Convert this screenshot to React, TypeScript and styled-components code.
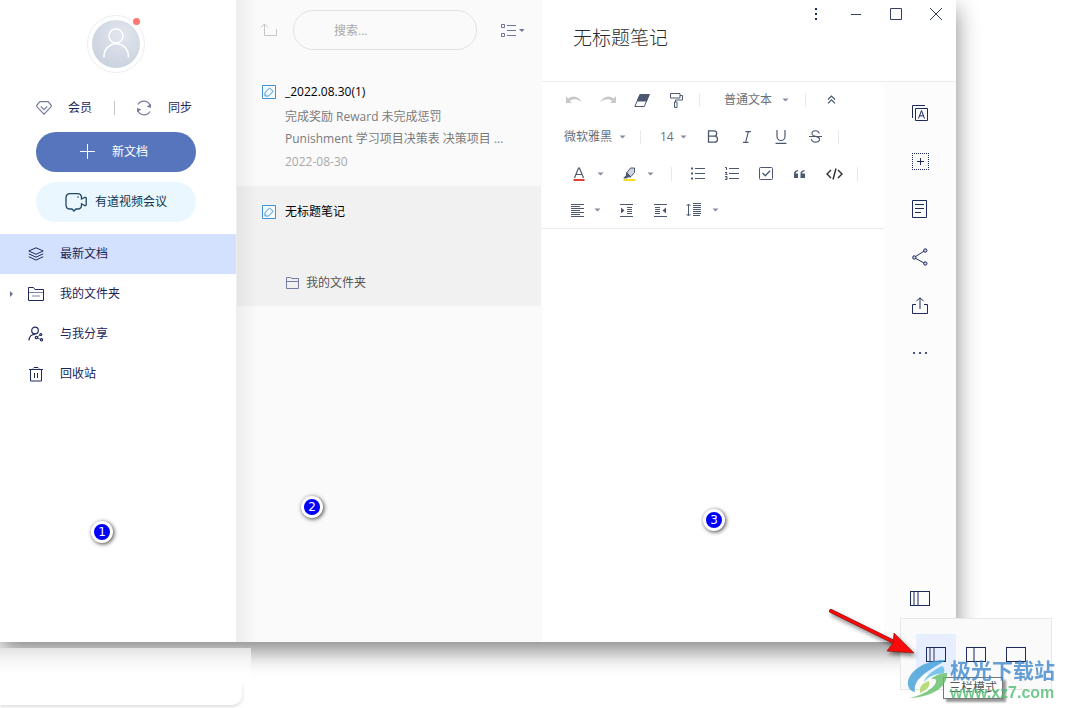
import React from 'react';
import styled, { createGlobalStyle } from 'styled-components';

const GlobalStyle = createGlobalStyle`
  *, *::before, *::after { box-sizing: border-box; }
  body {
    margin: 0;
    background: #fff;
    font-family: "Open Sans", "Noto Sans CJK SC", sans-serif;
    font-size: 12px;
    line-height: 20px;
    color: #1f2a5c;
  }
  button, input, select { font: inherit; color: inherit; margin: 0; padding: 0; }
  button { border: 0; background: none; cursor: pointer; }
  ul { list-style: none; margin: 0; padding: 0; }
  svg { display: block; flex: none; }
`;

const Desktop = styled.div`
  position: relative;
  display: flex;
  flex-direction: column;
  min-height: 100vh;
  overflow: hidden;
`;

const AppWindow = styled.div`
  flex: 1;
  display: flex;
  margin-right: 111px;
  background: #fff;
  box-shadow: 0 9px 22px rgba(0, 0, 0, 0.48);
`;

/* ---------- left column ---------- */

const Sidebar = styled.aside`
  flex: none;
  width: 236px;
  display: flex;
  flex-direction: column;
  background: #fff;
`;

const Account = styled.div`
  display: flex;
  flex-direction: column;
  align-items: center;
  padding: 15px 36px 12px;
`;

const Avatar = styled.button`
  position: relative;
  width: 58px;
  height: 58px;
  margin-right: 4px;
  border: 1px solid #ecedf6;
  border-radius: 50%;
  display: flex;
  align-items: center;
  justify-content: center;
`;

const AvatarFace = styled.span`
  width: 48px;
  height: 48px;
  border-radius: 50%;
  background: radial-gradient(circle at 60% 30%, #e2e6ee, #c3cddb);
`;

const AvatarDot = styled.span`
  position: absolute;
  top: 2px;
  right: 4px;
  width: 7px;
  height: 7px;
  border-radius: 50%;
  background: #ff7770;
`;

const AccountLinks = styled.div`
  align-self: stretch;
  display: flex;
  align-items: center;
  justify-content: space-between;
  margin: 25px 8px 14px 0;
`;

const AccountLink = styled.button`
  display: flex;
  align-items: center;
  gap: 16px;
`;

const Divider = styled.span<{ $space?: number; $dark?: boolean }>`
  flex: none;
  width: 1px;
  height: 14px;
  margin: 0 ${(p) => p.$space ?? 0}px;
  background: ${(p) => (p.$dark ? '#c4c4c8' : '#e9e9e9')};
`;

const PillButton = styled.button<{ $primary?: boolean }>`
  width: 160px;
  height: 40px;
  margin: 0 4px 10px 0;
  padding-right: ${(p) => (p.$primary ? 4 : 0)}px;
  border-radius: 20px;
  display: flex;
  align-items: center;
  justify-content: center;
  gap: ${(p) => (p.$primary ? 16 : 8)}px;
  color: ${(p) => (p.$primary ? '#fff' : '#0c3350')};
  background: ${(p) => (p.$primary ? '#5675bc' : '#ebf7fe')};
  &:last-child { margin-bottom: 0; }
`;

const NavItem = styled.a<{ $active?: boolean }>`
  height: 40px;
  padding-left: 8px;
  display: flex;
  align-items: center;
  color: #1a2456;
  text-decoration: none;
  background: ${(p) => (p.$active ? '#d3e1fe' : 'transparent')};
`;

const NavArrow = styled.span`
  width: 20px;
`;

const NavIcon = styled.span`
  width: 32px;
`;

/* ---------- middle column ---------- */

const NoteColumn = styled.section`
  position: relative;
  flex: none;
  width: 306px;
  background: #fafafa;
  &::after {
    content: '';
    position: absolute;
    inset: 0 auto 0 0;
    width: 22px;
    background: linear-gradient(90deg, rgba(0, 0, 0, 0.05), rgba(0, 0, 0, 0));
    pointer-events: none;
  }
`;

const SearchBar = styled.div`
  height: 60px;
  padding: 0 17px 0 24px;
  display: flex;
  align-items: center;
  justify-content: space-between;
`;

const SearchInput = styled.input`
  width: 184px;
  height: 40px;
  padding: 0 20px 0 40px;
  margin-right: 8px;
  border: 1px solid #e2e2e2;
  border-radius: 20px;
  background: transparent;
  outline: none;
  &::placeholder { color: #a9a9a9; opacity: 1; }
`;

const NoteList = styled.ul`
  padding: 6px 1px 0;
`;

const NoteItem = styled.li<{ $active?: boolean }>`
  height: 120px;
  padding: 16px 24px 0 24px;
  display: flex;
  align-items: flex-start;
  gap: 8px;
  background: ${(p) => (p.$active ? '#f1f1f1' : 'transparent')};
`;

const NoteMark = styled.span`
  padding: 3px 1px;
`;

const NoteBody = styled.div`
  flex: 1;
  min-width: 0;
  min-height: 91px;
  display: flex;
  flex-direction: column;
`;

const NoteTitle = styled.h2`
  margin: 0 0 4px;
  font-size: 12px;
  font-weight: 400;
  color: #000;
`;

const NoteText = styled.p`
  margin: 0;
  line-height: 22px;
  color: #7a7a7a;
`;

const NoteDate = styled.time`
  line-height: 23px;
  color: #a8a8a8;
`;

const NoteFolder = styled.span`
  margin-top: auto;
  display: flex;
  align-items: center;
  gap: 7px;
  color: #555;
`;

/* ---------- editor ---------- */

const Editor = styled.main`
  flex: 1;
  min-width: 0;
  display: flex;
  flex-direction: column;
`;

const EditorHeader = styled.header`
  height: 82px;
  display: flex;
  align-items: flex-start;
  justify-content: space-between;
  border-bottom: 1px solid #ebebeb;
`;

const TitleInput = styled.input`
  flex: 1;
  min-width: 0;
  height: 28px;
  margin: 24px 0 0 31px;
  border: 0;
  outline: none;
  background: transparent;
  font-size: 19px;
  font-weight: 300;
  line-height: 28px;
  color: #2b2b2b;
`;

const WindowControls = styled.div`
  display: flex;
`;

const WindowButton = styled.button`
  width: 40px;
  height: 28px;
  display: flex;
  align-items: center;
  justify-content: center;
`;

const EditorBody = styled.div`
  flex: 1;
  display: flex;
`;

const Page = styled.div`
  flex: 1;
  min-width: 0;
`;

const Toolbar = styled.div`
  display: grid;
  grid-template-rows: 36px 37px 37px 36px;
  border-bottom: 1px solid #ebebeb;
`;

const ToolRow = styled.div<{ $start: number }>`
  display: flex;
  align-items: center;
  padding-left: ${(p) => p.$start}px;
  color: #4c5870;
`;

const ToolButton = styled.button<{ $narrow?: boolean }>`
  flex: none;
  width: ${(p) => (p.$narrow ? 30 : 34)}px;
  height: 28px;
  display: flex;
  align-items: center;
  justify-content: center;
`;

const CaretButton = styled.button`
  width: 8px;
  height: 28px;
  display: flex;
  align-items: center;
  justify-content: center;
`;

const Combo = styled.span`
  flex: none;
  display: flex;
  margin-right: 8px;
`;

const SelectBox = styled.label<{ $before?: number; $after?: number; $gap?: number }>`
  flex: none;
  display: flex;
  align-items: center;
  gap: ${(p) => p.$gap ?? 6}px;
  margin: 0 ${(p) => p.$after ?? 0}px 0 ${(p) => p.$before ?? 0}px;
`;

const Select = styled.select`
  appearance: none;
  border: 0;
  background: none;
  outline: none;
  line-height: 20px;
  color: #6a7078;
`;

const Rail = styled.nav`
  flex: none;
  width: 72px;
  padding: 7px 0 20px;
  display: flex;
  flex-direction: column;
  align-items: center;
  background: #fcfcfc;
`;

const RailButton = styled.button`
  width: 48px;
  height: 48px;
  display: flex;
  align-items: center;
  justify-content: center;
  &:last-child { margin-top: auto; }
`;

/* ---------- area under the window ---------- */

const Under = styled.div`
  position: relative;
  height: 66px;
  padding-top: 6px;
`;

const UnderSheet = styled.div`
  width: 251px;
  height: 36px;
  background: linear-gradient(#e2e2e2, #f4f4f4 30%, #fff 70%);
`;

const UnderCard = styled.div`
  width: 242px;
  height: 21px;
  border-radius: 0 0 10px 0;
  background: #fff;
  box-shadow: 0 2px 4px rgba(0, 0, 0, 0.14);
  clip-path: inset(0 -8px -8px 0);
`;

/* ---------- overlays ---------- */

const ModePopup = styled.div`
  position: absolute;
  right: 15px;
  bottom: 18px;
  padding: 15px;
  display: flex;
  border: 1px solid #e8e8e8;
  background: #fafafa;
`;

const ModeButton = styled.button<{ $active?: boolean }>`
  width: 40px;
  height: 40px;
  display: flex;
  align-items: center;
  justify-content: center;
  background: ${(p) => (p.$active ? '#e6eeff' : 'transparent')};
`;

const Tooltip = styled.div`
  position: absolute;
  right: 64px;
  bottom: 9px;
  padding: 0 5px;
  border: 1px solid #767676;
  background: #fff;
  box-shadow: 3px 3px 2px rgba(0, 0, 0, 0.4);
  color: #555;
`;

const Watermark = styled.div`
  position: absolute;
  right: 12px;
  bottom: 5px;
  display: flex;
  align-items: center;
  opacity: 0.8;
  white-space: nowrap;
`;

const WatermarkText = styled.div`
  display: flex;
  flex-direction: column;
  font-weight: 700;
`;

const WatermarkName = styled.span`
  font-size: 21px;
  line-height: 26px;
  color: #4189cc;
`;

const WatermarkSite = styled.span`
  font-family: "Liberation Sans", sans-serif;
  font-size: 16px;
  line-height: 20px;
  color: #52bd72;
`;

const Pin = styled.span<{ $x: number; $y: number }>`
  position: absolute;
  left: ${(p) => p.$x}px;
  top: ${(p) => p.$y}px;
  width: 22px;
  height: 22px;
  border: 3px solid #fff;
  border-radius: 50%;
  background: #0000fa;
  box-shadow: 1px 1px 4px rgba(0, 0, 0, 0.75);
  font-family: "DejaVu Sans", sans-serif;
  font-size: 12px;
  line-height: 16px;
  text-align: center;
  color: #fff;
`;

const Arrow = styled.svg`
  position: absolute;
  right: 147px;
  bottom: 43px;
  filter: drop-shadow(2px 3px 2px rgba(0, 0, 0, 0.5));
`;

/* ---------- icons ---------- */

const NAVY = '#1f2a5c';

type IconProps = {
  w: number;
  h: number;
  color?: string;
  sw?: number;
  children: React.ReactNode;
};

const Icon = ({ w, h, color = NAVY, sw = 1, children }: IconProps) => (
  <svg width={w} height={h} viewBox={`0 0 ${w} ${h}`} fill="none" stroke={color} strokeWidth={sw} aria-hidden="true">
    {children}
  </svg>
);

const Caret = ({ color = '#868c9c' }: { color?: string }) => (
  <Icon w={7} h={4} color="none">
    <path d="M0.5 0.5h6L3.5 3.5z" fill={color} />
  </Icon>
);

const PersonIcon = () => (
  <svg width="48" height="48" viewBox="0 0 48 48" fill="none" stroke="#fff" strokeWidth="1.5" aria-hidden="true">
    <circle cx="24" cy="16" r="7" />
    <path d="M12 37.500V36a12.200 12.200 0 0 1 24.400 0v1.500" />
  </svg>
);

const MemberIcon = () => (
  <Icon w={16} h={14} color="#747c9c" sw={1.2}>
    <path d="M4 .7h8l3.200 3.600v1.300L8 13.200.8 5.600V4.300zM4.800 5.300 8 8.600l3.200-3.300" />
  </Icon>
);

const SyncIcon = () => (
  <Icon w={16} h={16} color="#747c9c" sw={1.2}>
    <path d="M2 4.500A6.800 6.800 0 0 1 14 5M14 11.500A6.800 6.800 0 0 1 2 11" />
    <path d="M15 4v4l-4.500-1.500zM1 12V8l4.500 1.500z" fill="#747c9c" stroke="none" />
  </Icon>
);

const VideoIcon = () => (
  <Icon w={22} h={20} color="#1e4766" sw={1.3}>
    <path d="M5 1.700h7.500c3 0 4 1.500 4 4V7l3.500-1.800 1.200.6v7.400l-1.200.6-3.500-2v1.400c0 2.500-1.500 3.800-4 3.800h-1.500l-2 2-2-2H5c-2.500 0-4-1.500-4-4v-7c0-2.800 1.500-4.300 4-4.300z" />
    <circle cx="13" cy="5" r=".8" fill="#1e4766" stroke="none" />
  </Icon>
);

const LayersIcon = () => (
  <Icon w={16} h={14}>
    <path d="M8 .8 15.200 4 8 7.300.8 4zM.8 6.800 8 10.200l7.200-3.400M.8 9.700 8 13.100l7.200-3.400" />
  </Icon>
);

const FolderNavIcon = () => (
  <Icon w={16} h={14}>
    <path d="M.5 13.500V.5h5l1.500 2h8.500v11z" />
    <path d="M1 5.500h14M4 9h8" stroke="#7c84a6" />
  </Icon>
);

const SharedIcon = () => (
  <Icon w={16} h={16} sw={1.2}>
    <circle cx="7" cy="4.500" r="3.300" />
    <path d="M1 14.500c0-4 2.500-6.200 6-6.200" />
    <path d="M8.500 11.500l4-2.700M8.500 11.500l4.500 2" strokeWidth=".7" />
    <circle cx="8.500" cy="11.500" r="1.200" fill="#fff" />
    <circle cx="12.800" cy="8.500" r="1" fill="#fff" />
    <circle cx="13.500" cy="13.700" r="1.100" fill="#fff" />
  </Icon>
);

const TrashIcon = () => (
  <Icon w={16} h={15}>
    <path d="M1 2.500h14M2.500 2.500v11.500h11V2.500M5 1.500l1-1h4l1 1M6.500 6v5M9.500 6v5" />
  </Icon>
);

const NoteIcon = () => (
  <Icon w={14} h={14} color="#3f93d2">
    <path d="M.5 .5h13v13H.5z" fill="#f6fbff" />
    <path d="M3 11V7.700L7.500 3l3.700 3.400L6.500 11z" />
  </Icon>
);

const ModeIcon = ({ bars }: { bars: number[] }) => (
  <Icon w={20} h={15}>
    <rect x=".5" y=".5" width="19" height="14" />
    {bars.map((x) => (
      <path key={x} d={`M${x} 1v13`} stroke="#8a90b0" strokeWidth="2" />
    ))}
  </Icon>
);

const INK = '#4c5870';

/* ---------- data ---------- */

const navItems = [
  { label: '最新文档', icon: <LayersIcon />, active: true },
  { label: '我的文件夹', icon: <FolderNavIcon />, expandable: true },
  { label: '与我分享', icon: <SharedIcon /> },
  { label: '回收站', icon: <TrashIcon /> },
];

const railItems = [
  {
    label: '翻译',
    icon: (
      <Icon w={16} h={16}>
        <path d="M.5 13V.5H13M3.500 3.500h12v12h-12zM6.500 13.500l3-8 3 8M7.500 10.800h4" />
      </Icon>
    ),
  },
  {
    label: '插入',
    icon: (
      <Icon w={17} h={17}>
        <path d="M0 .5h17M0 16.500h17M.5 0v17M16.500 0v17" strokeDasharray="1 1" />
        <path d="M5 8.500h7M8.500 5v7" />
      </Icon>
    ),
  },
  {
    label: '目录',
    icon: (
      <Icon w={16} h={18}>
        <path d="M.5 .5h14v17H.5zM3 4.500h9M3 8.500h9M3 12.500h6" />
      </Icon>
    ),
  },
  {
    label: '分享',
    icon: (
      <Icon w={16} h={18}>
        <path d="M2 9.500 13 2.500M2 9.500 13 15.500" />
        <circle cx="2.300" cy="9.500" r="1.700" fill="#c3c7d8" />
        <circle cx="13.300" cy="2.500" r="1.700" fill="#c3c7d8" />
        <circle cx="13.300" cy="15.500" r="1.700" fill="#c3c7d8" />
      </Icon>
    ),
  },
  {
    label: '导出',
    icon: (
      <Icon w={16} h={17}>
        <path d="M4 7.500H.5v9h15v-9H12M8 12V1M4.500 4 8 .8 11.500 4" />
      </Icon>
    ),
  },
  {
    label: '更多',
    icon: (
      <Icon w={14} h={2} color="none">
        <path d="M0 0h2v2H0zM6 0h2v2H6zM12 0h2v2h-2z" fill="#4b5480" />
      </Icon>
    ),
  },
];

type ToolProps = { label: string; narrow?: boolean; children: React.ReactNode };

const Tool = ({ label, narrow, children }: ToolProps) => (
  <ToolButton type="button" aria-label={label} $narrow={narrow}>
    {children}
  </ToolButton>
);

const ComboTool = ({ label, narrow, children }: ToolProps) => (
  <Combo>
    <Tool label={label} narrow={narrow}>
      {children}
    </Tool>
    <CaretButton type="button" aria-label={`${label}选项`}>
      <Caret />
    </CaretButton>
  </Combo>
);

type ToolSelectProps = { label: string; value: string; before?: number; after?: number; gap?: number };

const ToolSelect = ({ label, value, before, after, gap }: ToolSelectProps) => (
  <SelectBox $before={before} $after={after} $gap={gap}>
    <Select aria-label={label} defaultValue={value}>
      <option>{value}</option>
    </Select>
    <Caret />
  </SelectBox>
);

const EditorToolbar = () => (
  <Toolbar>
    <ToolRow $start={15}>
      <Tool label="撤销">
        <Icon w={16} h={10} color="none">
          <path d="M0 1v7h6L3.800 6C7 3.300 11.500 3.600 16 7.600 13 .8 6.500-.2 2.200 3.600z" fill="#c8c8c8" />
        </Icon>
      </Tool>
      <Tool label="重做">
        <Icon w={16} h={10} color="none">
          <path d="M16 1v7h-6l2.200-2C9 3.300 4.500 3.600 0 7.600 3 .8 9.500-.2 13.800 3.600z" fill="#c8c8c8" />
        </Icon>
      </Tool>
      <Tool label="清除格式">
        <Icon w={16} h={13} color={INK}>
          <path d="M6 .5h9.200L10.300 12.500H.8z" fill="#fff" />
          <path d="M6 .5h9.200l-2.700 6.500H3.300z" fill={INK} />
        </Icon>
      </Tool>
      <Tool label="格式刷">
        <Icon w={13} h={15} color={INK}>
          <path d="M.5 .5h9.500v4.500H.5zM10 2.500h2.500v4.500h-7V9M4.500 9h2.500v5.500H4.500z" />
        </Icon>
      </Tool>
      <Divider $space={6} />
      <ToolSelect label="段落样式" value="普通文本" before={18} after={8} gap={9} />
      <Divider $space={8} />
      <Tool label="收起工具栏">
        <Icon w={9} h={10} color={INK} sw={1.2}>
          <path d="M1 4.500 4.500 1 8 4.500M1 8.300l3.500-3.500L8 8.300" />
        </Icon>
      </Tool>
    </ToolRow>

    <ToolRow $start={22}>
      <ToolSelect label="字体" value="微软雅黑" after={8} />
      <Divider $space={6} />
      <ToolSelect label="字号" value="14" before={13} after={9} />
      <Tool label="加粗">
        <Icon w={12} h={13} color={INK} sw={1.3}>
          <path d="M1.500 .8H7a2.700 2.700 0 0 1 0 5.400H1.500zM1.500 6.200h6a3 3 0 0 1 0 6h-6z" />
        </Icon>
      </Tool>
      <Tool label="斜体">
        <Icon w={8} h={12} color={INK} sw={1.1}>
          <path d="M2.500 .6H8M0 11.400h5.500M5.400 .6 2.600 11.400" />
        </Icon>
      </Tool>
      <Tool label="下划线">
        <Icon w={12} h={14} color={INK} sw={1.2}>
          <path d="M2 0v6.500a4 4 0 0 0 8 0V0M.5 13.400h11" />
        </Icon>
      </Tool>
      <Tool label="删除线">
        <Icon w={13} h={13} color={INK} sw={1.1}>
          <path d="M10.200 3.500C9.800 1.600 8.500 .8 6.500 .8 4.300 .8 3 1.900 3 3.500c0 4 7.500 1.800 7.500 5.700 0 1.800-1.600 2.900-4 2.900-2.500 0-3.800-1.200-4.200-3M0 6.500h13" />
        </Icon>
      </Tool>
      <Divider $space={6} />
    </ToolRow>

    <ToolRow $start={20}>
      <ComboTool label="文字颜色">
        <Icon w={12} h={14} color={INK} sw={1.2}>
          <path d="M1.500 11 5.500 1h1l4 10M3 7.500h6" />
          <path d="M.5 13h11" stroke="#e0402f" strokeWidth="2" />
        </Icon>
      </ComboTool>
      <ComboTool label="背景颜色">
        <Icon w={13} h={14} color={INK}>
          <path d="M4 5.500 7.500 1h4v4.500L8 9.500H5z" fill="#d0d4dc" />
          <path d="M3.500 5.500 8 10 5 9.800 3.500 11H.8l2.500-2.500z" fill={INK} />
          <path d="M.5 13h12" stroke="#f7dc28" strokeWidth="2" />
        </Icon>
      </ComboTool>
      <Divider $space={9} />
      <Tool label="无序列表">
        <Icon w={14} h={13} color={INK}>
          <path d="M4 1.500h10M4 6.500h10M4 11.500h10" />
          <path d="M0 1.500h2M0 6.500h2M0 11.500h2" strokeWidth="2" />
        </Icon>
      </Tool>
      <Tool label="有序列表">
        <Icon w={14} h={13} color={INK}>
          <path d="M4 1.500h10M4 6.500h10M4 11.500h10" />
          <path d="M0 .5h1.500V3M0 5.500h2L.5 7.500h2M0 9.500h2v3H0M.5 11H2" />
        </Icon>
      </Tool>
      <Tool label="待办">
        <Icon w={14} h={13} color={INK}>
          <rect x=".5" y=".5" width="13" height="12" rx="1" />
          <path d="M3.500 6 6.300 8.800l4.700-5" strokeWidth="1.300" />
        </Icon>
      </Tool>
      <Tool label="引用">
        <Icon w={12} h={8} color="none">
          <path d="M0 8V3.500Q0 .5 4 0v1.200Q1.500 1.800 1.500 3.500H4V8zM6.500 8V3.500q0-3 4-3.500v1.200Q8 1.800 8 3.500h3V8z" fill={INK} />
        </Icon>
      </Tool>
      <Tool label="代码">
        <Icon w={17} h={12} color="#2c2c2c" sw={1.4}>
          <path d="M5 2 1 6l4 4M12 2l4 4-4 4M10 .5 7 11.500" />
        </Icon>
      </Tool>
      <Divider $space={6} />
    </ToolRow>

    <ToolRow $start={21}>
      <ComboTool label="对齐" narrow>
        <Icon w={14} h={13} color={INK}>
          <path d="M0 .5h13M0 2.500h9M0 4.500h13M0 6.500h9M0 8.500h13M0 10.500h9M0 12.500h13" />
        </Icon>
      </ComboTool>
      <Tool label="增加缩进">
        <Icon w={13} h={13} color={INK}>
          <path d="M0 .5h13M0 12.500h13M7 3.500h5M7 5.500h5M7 7.500h5M7 9.500h5" />
          <path d="M1 3.500v6l3.500-3z" fill={INK} stroke="none" />
        </Icon>
      </Tool>
      <Tool label="减少缩进">
        <Icon w={13} h={13} color={INK}>
          <path d="M0 .5h13M0 12.500h13M1 3.500h5M1 5.500h5M1 7.500h5M1 9.500h5" />
          <path d="M12 3.500v6l-3.500-3z" fill={INK} stroke="none" />
        </Icon>
      </Tool>
      <ComboTool label="行高">
        <Icon w={16} h={14} color={INK}>
          <path d="M7 .5h8M7 2.500h8M7 4.500h8M7 6.500h8M7 8.500h8M7 10.500h8M7 12.500h7M2.500 1.500v11M.5 3l2-2 2 2M.5 11l2 2 2-2" />
        </Icon>
      </ComboTool>
    </ToolRow>
  </Toolbar>
);

export default function App() {
  return (
    <>
      <GlobalStyle />
      <Desktop>
        <AppWindow>
          <Sidebar>
            <Account>
              <Avatar type="button" aria-label="账号">
                <AvatarFace>
                  <PersonIcon />
                </AvatarFace>
                <AvatarDot />
              </Avatar>
              <AccountLinks>
                <AccountLink type="button">
                  <MemberIcon />
                  会员
                </AccountLink>
                <Divider $dark />
                <AccountLink type="button">
                  <SyncIcon />
                  同步
                </AccountLink>
              </AccountLinks>
              <PillButton type="button" $primary>
                <Icon w={16} h={16} color="#fff">
                  <path d="M0 7.500h15M7.500 0v15" />
                </Icon>
                新文档
              </PillButton>
              <PillButton type="button">
                <VideoIcon />
                有道视频会议
              </PillButton>
            </Account>
            <nav>
              {navItems.map((item) => (
                <NavItem key={item.label} href="#" $active={item.active}>
                  <NavArrow>
                    {item.expandable && (
                      <Icon w={6} h={6} color="none">
                        <path d="M2 0v6l3-3z" fill="#6b7394" />
                      </Icon>
                    )}
                  </NavArrow>
                  <NavIcon>{item.icon}</NavIcon>
                  {item.label}
                </NavItem>
              ))}
            </nav>
          </Sidebar>

          <NoteColumn>
            <SearchBar>
              <button type="button" aria-label="返回上级">
                <Icon w={18} h={14} color="#c6c6c6">
                  <path d="M4.500 1v11.500h12V6M1 4.500l3.500-3.500L8 4.500" />
                </Icon>
              </button>
              <SearchInput type="text" aria-label="搜索" placeholder="搜索..." />
              <button type="button" aria-label="视图">
                <Icon w={25} h={13} color="#6d759a">
                  <path d="M1.500 .5h3v3h-3zM1.500 9.500h3v3h-3zM7 1.500h9M7 6.500h9M7 11.500h9" />
                  <path d="M19 5h5.500l-2.700 3z" fill="#6d759a" stroke="none" />
                </Icon>
              </button>
            </SearchBar>
            <NoteList>
              <NoteItem>
                <NoteMark>
                  <NoteIcon />
                </NoteMark>
                <NoteBody>
                  <NoteTitle>_2022.08.30(1)</NoteTitle>
                  <NoteText>
                    完成奖励 Reward 未完成惩罚
                    <br />
                    Punishment 学习项目决策表 决策项目 ...
                  </NoteText>
                  <NoteDate>2022-08-30</NoteDate>
                </NoteBody>
              </NoteItem>
              <NoteItem $active>
                <NoteMark>
                  <NoteIcon />
                </NoteMark>
                <NoteBody>
                  <NoteTitle>无标题笔记</NoteTitle>
                  <NoteFolder>
                    <Icon w={14} h={12} color="#757da0">
                      <path d="M1.500 .5h4l1.500 1h6.500v10h-12zM1.500 4.500h12" />
                    </Icon>
                    我的文件夹
                  </NoteFolder>
                </NoteBody>
              </NoteItem>
            </NoteList>
          </NoteColumn>

          <Editor>
            <EditorHeader>
              <TitleInput type="text" aria-label="标题" defaultValue="无标题笔记" />
              <WindowControls>
                <WindowButton type="button" aria-label="菜单">
                  <Icon w={2} h={12} color="none">
                    <path d="M0 0h2v2H0zM0 5h2v2H0zM0 10h2v2H0z" fill={NAVY} />
                  </Icon>
                </WindowButton>
                <WindowButton type="button" aria-label="最小化">
                  <Icon w={10} h={1} color="#33415f">
                    <path d="M0 .5h10" />
                  </Icon>
                </WindowButton>
                <WindowButton type="button" aria-label="最大化">
                  <Icon w={12} h={12} color="#33415f">
                    <path d="M.5 .5h11v11H.5z" />
                  </Icon>
                </WindowButton>
                <WindowButton type="button" aria-label="关闭">
                  <Icon w={12} h={12} color="#33415f">
                    <path d="M0 0l12 12M12 0 0 12" />
                  </Icon>
                </WindowButton>
              </WindowControls>
            </EditorHeader>
            <EditorBody>
              <Page>
                <EditorToolbar />
              </Page>
              <Rail>
                {railItems.map((item) => (
                  <RailButton key={item.label} type="button" aria-label={item.label}>
                    {item.icon}
                  </RailButton>
                ))}
                <RailButton type="button" aria-label="布局模式">
                  <ModeIcon bars={[4, 8]} />
                </RailButton>
              </Rail>
            </EditorBody>
          </Editor>
        </AppWindow>

        <Under>
          <UnderSheet />
          <UnderCard />
        </Under>

        <ModePopup>
          <ModeButton type="button" $active aria-label="三栏">
            <ModeIcon bars={[4, 8]} />
          </ModeButton>
          <ModeButton type="button" aria-label="双栏">
            <ModeIcon bars={[8]} />
          </ModeButton>
          <ModeButton type="button" aria-label="单栏">
            <ModeIcon bars={[]} />
          </ModeButton>
        </ModePopup>
        <Tooltip role="tooltip">三栏模式</Tooltip>
        <Watermark>
          <svg width="44" height="42" viewBox="0 0 44 42" aria-hidden="true">
            <path d="M40 1C24 0 5 9 2 22c-1 6 2 10 7 11-1-6 1-11 7-16C22 11 31 7 40 1z" fill="#3f9fd8" />
            <path d="M36 7c-8 4-17 10-18 16 5-6 11-8 20-9 1-3 0-6-2-7z" fill="#5fbde8" />
            <path d="M41 14c1 12-12 24-37 25 12-3 24-9 26-16 1-3-2-4-5-3 4-4 11-6 16-6z" fill="#62bf6a" />
            <path d="M23 22c-7 2-10 6-9 12 7-3 11-7 9-12z" fill="#a9d45c" />
          </svg>
          <WatermarkText>
            <WatermarkName>极光下载站</WatermarkName>
            <WatermarkSite>www.xz7.com</WatermarkSite>
          </WatermarkText>
        </Watermark>

        <Pin $x={91} $y={521}>1</Pin>
        <Pin $x={301} $y={496}>2</Pin>
        <Pin $x={703} $y={509}>3</Pin>
        <Arrow width="92" height="60" viewBox="0 0 92 60" aria-hidden="true">
          <path d="M3 6 66 37" stroke="#7d1010" strokeWidth="4" strokeLinecap="round" />
          <path d="M3 6 66 37" stroke="#fa0a0a" strokeWidth="3" strokeLinecap="round" />
          <path d="M86 48 59 46l6-8 1-10z" fill="#fa0a0a" stroke="#7d1010" strokeWidth=".6" />
        </Arrow>
      </Desktop>
    </>
  );
}
